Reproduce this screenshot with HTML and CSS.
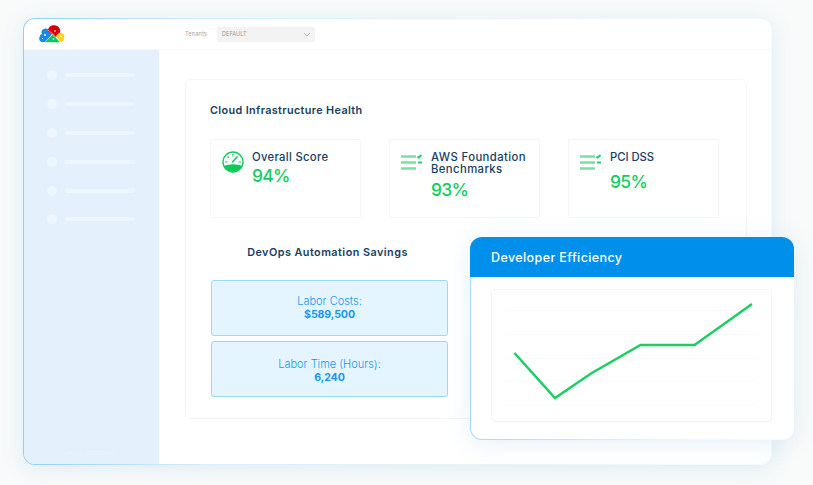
FILE: index.html
```html
<!DOCTYPE html>
<html lang="en">
<head>
<meta charset="utf-8">
<title>Cloud Dashboard</title>
<link rel="stylesheet" href="styles.css">
</head>
<body>
<div class="window">
  <header class="topbar">
    <svg class="logo" width="28" height="18" viewBox="0 0 28 18">
      <path d="M6 17C2 18 0 14 2 11c0-1 1-2 2-2C2 6 6 2 10 4l4 5-6 8z" fill="#168be6"/>
      <path d="M10 6C10 2 13 .3 16 .3c5 0 8 5 5 9l-3 3-4-3z" fill="#d6000c"/>
      <path d="M18 11l3-3c5-1 7 4 4 8l-3 1z" fill="#ffd21a"/>
      <path d="M7 17.3l8-8 7 8z" fill="#0ac85a"/>
      <g stroke="#fff" stroke-width=".5" fill="none"><path d="M7 17l8-8 7 8M15 9l-5-4"/></g>
      <g fill="#fff"><circle cx="7" cy="10" r=".9"/><circle cx="4.500" cy="13.500" r=".6"/><circle cx="17" cy="6" r=".8"/><circle cx="23" cy="11.500" r=".8"/><circle cx="15.500" cy="14" r=".8"/></g>
    </svg>
    <span class="tenant">Tenants</span>
    <div class="select"><span>DEFAULT</span>
      <svg width="8" height="5" viewBox="0 0 8 5"><path d="M1 1l3 3 3-3" fill="none" stroke="#aaa" stroke-width=".8"/></svg>
    </div>
  </header>
  <div class="body">
    <aside class="sidebar">
      <div class="nav">
        <div class="item"><i></i><b></b></div>
        <div class="item"><i></i><b></b></div>
        <div class="item"><i></i><b></b></div>
        <div class="item"><i></i><b></b></div>
        <div class="item"><i></i><b></b></div>
        <div class="item"><i></i><b></b></div>
      </div>
      <div class="foot">©DUPLOCLOUD INC</div>
    </aside>
    <main class="main">
      <section class="panel">
        <h1>Cloud Infrastructure Health</h1>
        <div class="cards">
          <article class="card">
            <svg class="gauge" width="22" height="22" viewBox="0 0 22 22">
              <circle cx="11" cy="11" r="10" fill="#fff" stroke="#17cb62" stroke-width="1.400"/>
              <path d="M1.800 14.800Q11 11.500 20.200 14.800A10 10 0 0 1 1.800 14.800z" fill="#0ccb5b"/>
              <path d="M11 3v2.500M5.500 5.500l1.500 1.500M3 11h2.500M16.500 11H19" stroke="#17cb62" stroke-width="1.200"/>
              <path d="M10 11.500L15.500 5.500" stroke="#17cb62" stroke-width="1.600"/>
            </svg>
            <div class="info"><h2>Overall Score</h2><p class="n1">94%</p></div>
          </article>
          <article class="card">
            <svg class="list" width="22" height="17" viewBox="0 0 22 17"><path d="M0 2.500h15M0 8.500h15M0 14.500h15" stroke="#78e1a3" stroke-width="2.600"/><path d="M16.500 2.500l1.300 1.200L20.500 1M17 8.500h4" stroke="#25cf6c" stroke-width="2" fill="none"/></svg>
            <div class="info"><h2 class="aws">AWS Foundation</h2><h2 class="aws">Benchmarks</h2><p class="n2">93%</p></div>
          </article>
          <article class="card">
            <svg class="list" width="22" height="17" viewBox="0 0 22 17"><path d="M0 2.500h15M0 8.500h15M0 14.500h15" stroke="#78e1a3" stroke-width="2.600"/><path d="M16.500 2.500l1.300 1.200L20.500 1M17 8.500h4" stroke="#25cf6c" stroke-width="2" fill="none"/></svg>
            <div class="info"><h2 class="pci">PCI DSS</h2><p class="n3">95%</p></div>
          </article>
        </div>
        <div class="savings">
          <h2>DevOps Automation Savings</h2>
          <div class="box"><span>Labor Costs:</span><strong>$589,500</strong></div>
          <div class="box time"><span>Labor Time (Hours):</span><strong>6,240</strong></div>
        </div>
      </section>
    </main>
  </div>
</div>
<section class="popup">
  <h2>Developer Efficiency</h2>
  <div class="chart">
    <svg width="279" height="131" viewBox="492 290 279 131">
      <path d="M506 310.500h250M506 334.500h250M506 358.500h250M506 380.500h250M506 404.500h250" stroke="#fafafa"/>
      <path d="M514.500 353L555 398l36-24.500 49.500-28.500H694.500L752 304" fill="none" stroke="#1dce65" stroke-width="2.500"/>
    </svg>
  </div>
</section>
</body>
</html>
```
FILE: styles.css
```css
* { box-sizing: border-box; }
body { margin: 0; width: 813px; height: 485px; overflow: hidden; background: #f9fafa; font-family: Inter, "Liberation Sans", sans-serif; color: #17415f; padding: 18px 0 0 23px; }
h1, h2, p { margin: 0; white-space: nowrap; }
.window { width: 749px; height: 447px; border-radius: 12px; border: 1.500px solid transparent; background: linear-gradient(#fff, #fff) padding-box, linear-gradient(90deg, #8fd0f7, #d6effd 25%, #f4fafe 90%) border-box; box-shadow: 0 4px 22px rgba(90, 165, 220, .16); overflow: hidden; }
.topbar { height: 31px; display: flex; align-items: center; border-bottom: 1px solid #f6f7f8; }
.logo { margin: 0 0 0 14px; }
.tenant { width: 32px; margin-left: 119px; font-size: 5.500px; letter-spacing: .2px; color: #a5a5a5; }
.select { width: 98px; height: 15px; background: #f3f3f3; display: flex; align-items: center; justify-content: space-between; padding: 0 4px 0 5px; font-size: 5.500px; letter-spacing: .1px; color: #999; border-radius: 1px; }
.body { display: flex; height: 414px; }
.sidebar { width: 135px; background: #e4f0fc; padding: 20px 24px 0 23px; display: flex; flex-direction: column; justify-content: space-between; }
.nav { display: flex; flex-direction: column; gap: 18.900px; }
.item { display: flex; align-items: center; gap: 8px; height: 10px; }
.item i { width: 10px; height: 10px; border-radius: 50%; background: #edf6fd; }
.item b { width: 71px; height: 4px; border-radius: 2px; background: #edf6fd; }
.foot { font-size: 5px; color: #edf5fc; text-align: center; padding-bottom: 8px; }
.main { flex: 1; padding: 29px 0 0 26px; }
.panel { width: 562px; height: 340px; border: 1px solid #f4f5f6; border-radius: 5px; padding: 23px 0 0 24px; }
h1 { font-size: 10.800px; line-height: 16px; font-weight: 600; letter-spacing: .38px; }
.cards { display: flex; gap: 28px; margin: 20px 0 0; }
.card { width: 151px; height: 79px; border: 1px solid #f4f5f6; border-radius: 2px; padding: 11px 0 0 11px; display: flex; align-items: flex-start; gap: 8px; }
.list { margin: 3px 0 0; }
.card h2 { font-size: 11.300px; line-height: 12px; font-weight: 500; letter-spacing: .3px; }
.card .aws { letter-spacing: .4px; }
.card .pci { letter-spacing: -.05px; }
.card p { font-size: 17.500px; line-height: 22px; font-weight: 500; color: #16cc62; letter-spacing: -.7px; }
.info { display: flex; flex-direction: column; align-items: flex-start; }
.card .n1 { margin-top: 2px; }
.n2 { margin-top: 4px; }
.n3 { margin-top: 8px; }
.savings { width: 237px; margin-left: 1px; display: flex; flex-direction: column; align-items: center; }
.savings h2 { font-size: 10.800px; line-height: 16px; font-weight: 600; letter-spacing: .48px; margin: 27px 0 19px -4px; }
.box { width: 237px; height: 56px; border: 1px solid #9fd7fa; border-radius: 3px; background: #e5f5ff; color: #1597ef; font-size: 11px; line-height: 13px; display: flex; flex-direction: column; align-items: center; justify-content: center; margin-bottom: 5px; }
.time { padding-top: 4px; }
.box span { font-weight: 300; }
.box strong { font-weight: 700; font-size: 10.600px; letter-spacing: -.1px; }
.popup { position: absolute; left: 470px; top: 237px; width: 324px; height: 203px; border-radius: 12px; border: 1px solid transparent; background: linear-gradient(#fff, #fff) padding-box, linear-gradient(80deg, #a5d9fa, #edf8ff 60%, #fff) border-box; box-shadow: 0 3px 24px rgba(90, 165, 220, .16); }
.popup h2 { margin: -1px; height: 40px; border-radius: 12px 12px 0 0; background: #0090eb; color: #fff; font-size: 12.500px; font-weight: 500; line-height: 41px; letter-spacing: .4px; padding-left: 21px; }
.chart { width: 281px; height: 133px; margin: 13px 0 0 20px; border: 1px solid #f4f4f4; border-radius: 4px; }
.chart svg { display: block; }
```
